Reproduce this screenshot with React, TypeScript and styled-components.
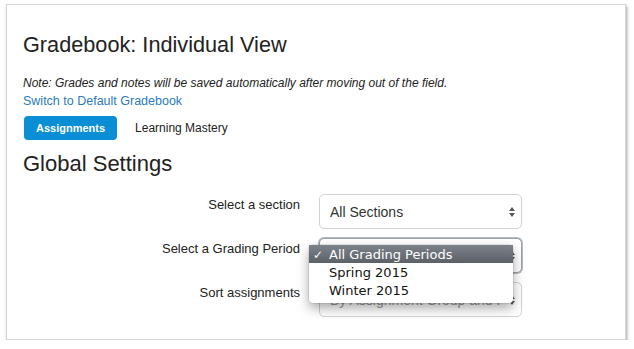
import React from 'react';
import styled, { createGlobalStyle } from 'styled-components';

const GlobalStyle = createGlobalStyle`
  html, body {
    margin: 0;
    padding: 0;
    background: #ffffff;
    font-family: "Liberation Sans", Arial, sans-serif;
    color: #2d3b45;
  }
`;

const Page = styled.div`
  padding: 4px 0 0 6px;
`;

const Card = styled.div`
  box-sizing: border-box;
  width: 620px;
  height: 336px;
  background: #fff;
  border: 1px solid #d6d6d6;
  box-shadow: 1px 2px 3px rgba(0, 0, 0, 0.35);
  padding: 27px 16px 0 16px;
`;

const Title = styled.h1`
  margin: 0;
  font-size: 21.7px;
  line-height: 26px;
  font-weight: normal;
  color: #222;
`;

const Note = styled.p`
  margin: 17px 0 0 0;
  font-size: 12px;
  line-height: 16px;
  font-style: italic;
  color: #222;
`;

const Link = styled.a`
  display: block;
  margin-top: 1px;
  font-size: 12.5px;
  line-height: 18px;
  color: #2a7bbc;
  text-decoration: none;
`;

const Tabs = styled.div`
  display: flex;
  align-items: center;
  gap: 18px;
  margin-top: 6px;
  margin-left: 1px;
`;

const Tab = styled.div<{ $active?: boolean }>`
  font-size: ${(p) => (p.$active ? '11px' : '12px')};
  line-height: 24px;
  height: 24px;
  border-radius: 4px;
  background: ${(p) => (p.$active ? '#0a8ed6' : 'transparent')};
  color: ${(p) => (p.$active ? '#fff' : '#222')};
  font-weight: ${(p) => (p.$active ? 'bold' : 'normal')};
  padding: ${(p) => (p.$active ? '0 12px' : '0')};
`;

const Heading = styled.h2`
  margin: 11px 0 0 0;
  font-size: 22px;
  line-height: 26px;
  font-weight: normal;
  color: #222;
`;

const Form = styled.div`
  display: grid;
  grid-template-columns: 277px 203px;
  column-gap: 19px;
  row-gap: 9px;
  margin-top: 17px;
`;

const Label = styled.div`
  text-align: right;
  font-size: 13px;
  line-height: 16px;
  padding-top: 3px;
  color: #222;
`;

const SelectWrap = styled.div`
  position: relative;
`;

const SelectBox = styled.div<{ $focused?: boolean }>`
  box-sizing: border-box;
  height: 35px;
  border: 1px solid ${(p) => (p.$focused ? '#9aa0a8' : '#cfd3d6')};
  box-shadow: ${(p) => (p.$focused ? '0 0 0 1px #b5bac0' : 'none')};
  border-radius: 5px;
  background: #fff;
  display: flex;
  align-items: center;
  justify-content: space-between;
  gap: 4px;
  padding: 0 5px 0 10px;
  font-size: 14px;
  color: #333;
`;

const Value = styled.span<{ $muted?: boolean }>`
  color: ${(p) => (p.$muted ? '#999' : '#333')};
  white-space: nowrap;
  overflow: hidden;
`;

const Menu = styled.div`
  position: absolute;
  left: -10px;
  top: 7px;
  width: 204px;
  background: #fff;
  border-radius: 4px;
  box-shadow: 0 5px 12px rgba(0, 0, 0, 0.35), 0 0 0 1px rgba(0, 0, 0, 0.08);
  padding: 0 0 4px 0;
  font-family: "DejaVu Sans", "Noto Sans", sans-serif;
  font-size: 13px;
  z-index: 2;
`;

const Option = styled.div<{ $selected?: boolean }>`
  box-sizing: border-box;
  display: flex;
  align-items: center;
  height: 18px;
  padding: 1px 0 0 4px;
  color: ${(p) => (p.$selected ? '#fff' : '#111')};
  background: ${(p) =>
    p.$selected ? 'linear-gradient(#7d828a, #5c6168)' : 'transparent'};
`;

const Check = styled.span`
  display: inline-block;
  width: 16px;
  font-size: 12px;
`;

function Arrows() {
  return (
    <svg width="8" height="12" viewBox="0 0 8 12" style={{ flex: 'none' }}>
      <path d="M4 1 L7 5 L1 5 Z" fill="#555" />
      <path d="M4 11 L7 7 L1 7 Z" fill="#555" />
    </svg>
  );
}

export default function App() {
  return (
    <Page>
      <GlobalStyle />
      <Card>
        <Title>Gradebook: Individual View</Title>
        <Note>
          Note: Grades and notes will be saved automatically after moving out of
          the field.
        </Note>
        <Link href="#">Switch to Default Gradebook</Link>
        <Tabs>
          <Tab $active>Assignments</Tab>
          <Tab>Learning Mastery</Tab>
        </Tabs>
        <Heading>Global Settings</Heading>
        <Form>
          <Label>Select a section</Label>
          <SelectWrap>
            <SelectBox>
              <Value>All Sections</Value>
              <Arrows />
            </SelectBox>
          </SelectWrap>

          <Label>Select a Grading Period</Label>
          <SelectWrap>
            <SelectBox $focused>
              <Value>All Grading Periods</Value>
              <Arrows />
            </SelectBox>
            <Menu>
              <Option $selected>
                <Check>✓</Check>All Grading Periods
              </Option>
              <Option>
                <Check />Spring 2015
              </Option>
              <Option>
                <Check />Winter 2015
              </Option>
            </Menu>
          </SelectWrap>

          <Label>Sort assignments</Label>
          <SelectWrap>
            <SelectBox>
              <Value $muted>By Assignment Group and Position</Value>
              <Arrows />
            </SelectBox>
          </SelectWrap>
        </Form>
      </Card>
    </Page>
  );
}
